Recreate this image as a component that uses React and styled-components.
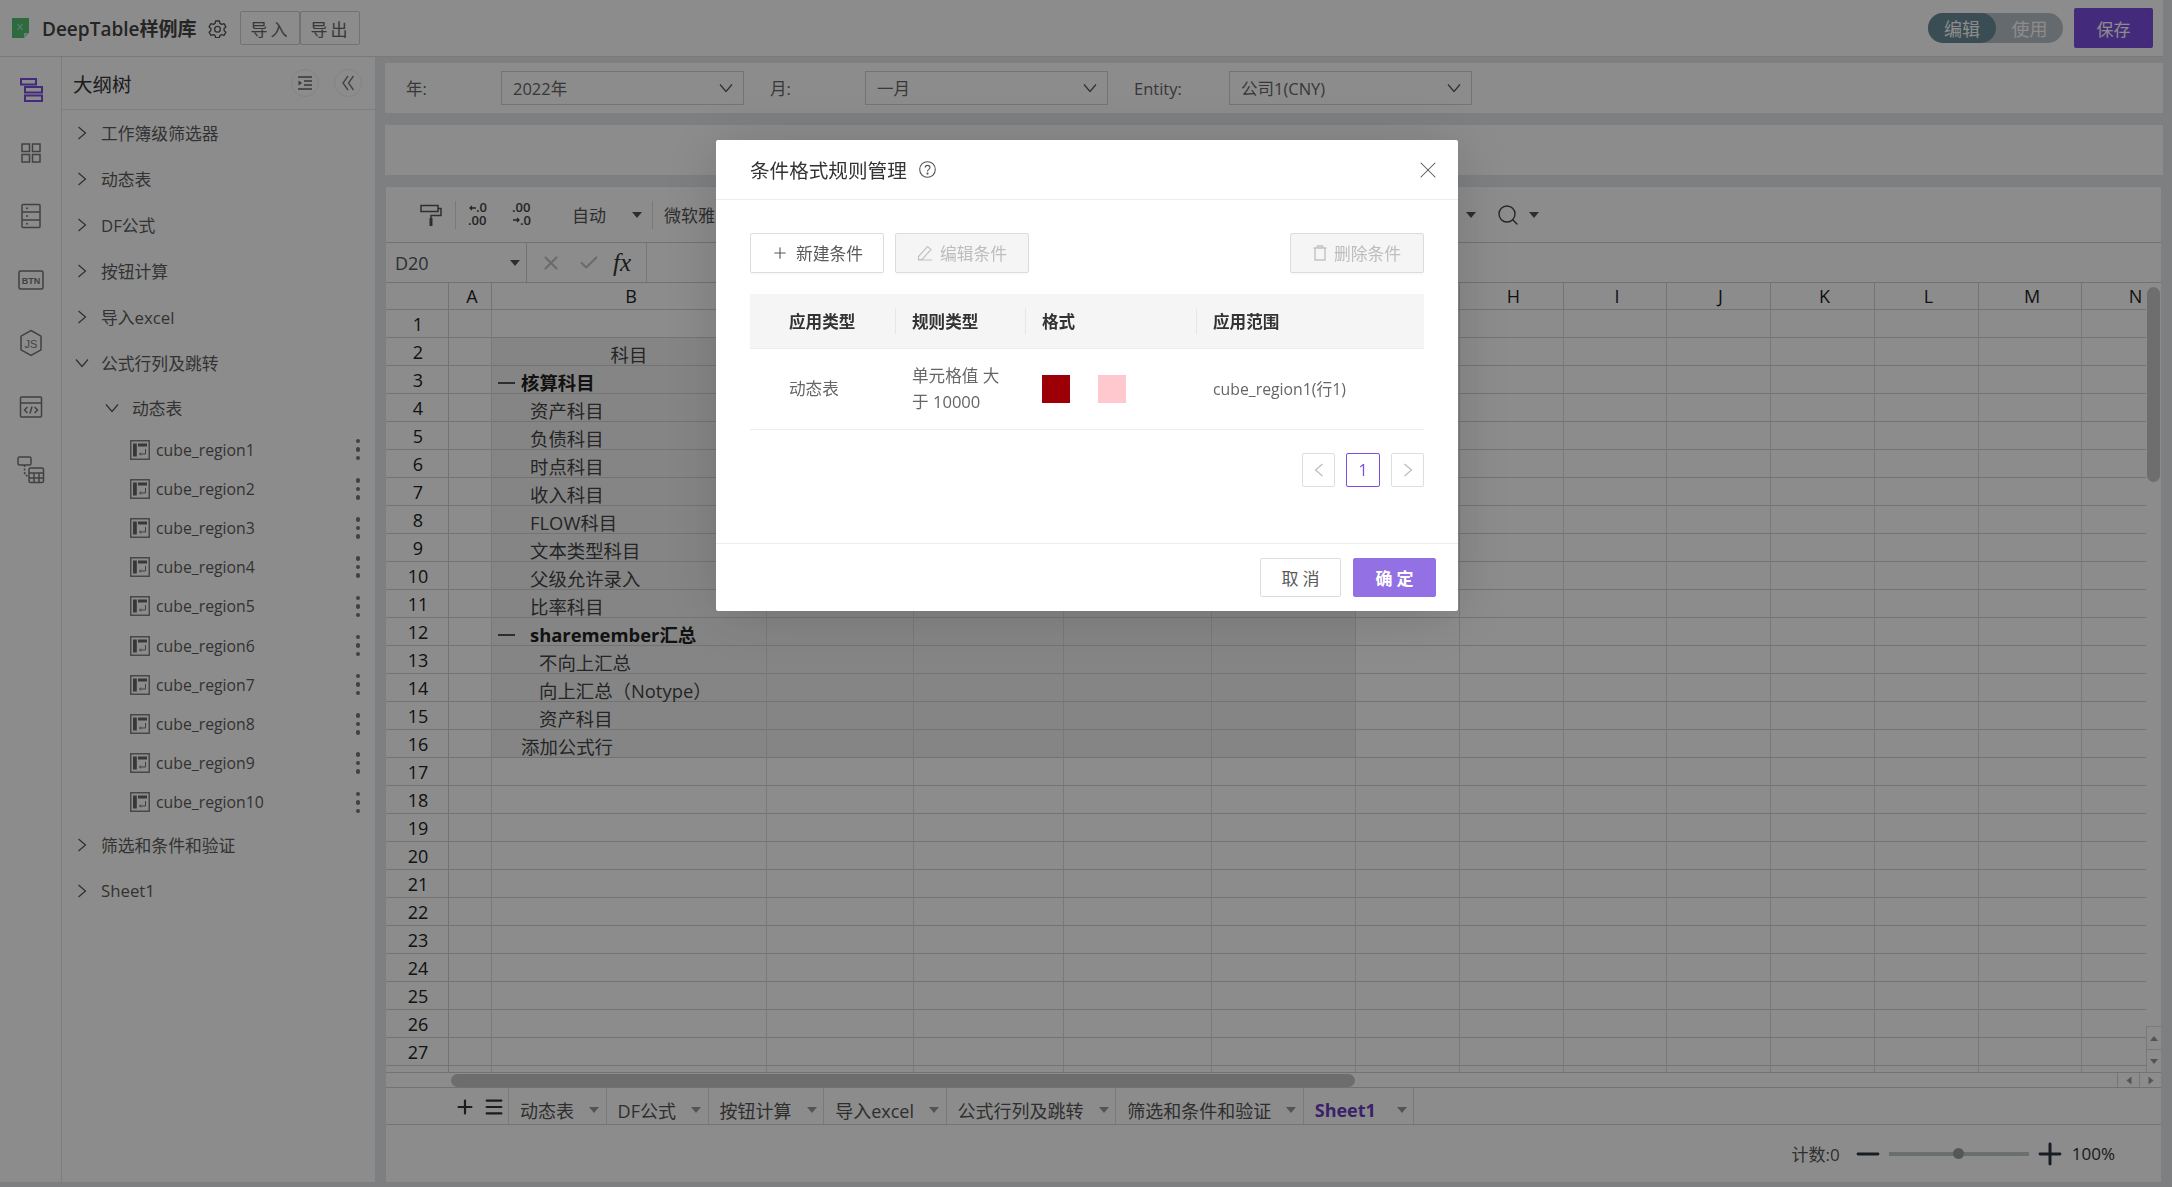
import React from 'react'
import styled, { createGlobalStyle } from 'styled-components'
import { Plus, Menu, Minus, X, Check, Search } from 'lucide-react'

const Global = createGlobalStyle`
  html, body {
    margin: 0;
    padding: 0;
    height: 100%;
    overflow: hidden;
    background: #e6e8eb;
    font-family: "Open Sans", "Noto Sans CJK SC", sans-serif;
  }
  * { box-sizing: border-box; }
`

const Page = styled.div`
  width: 2163px;
  height: 1182px;
  display: flex;
  flex-direction: column;
`

const Header = styled.header`
  height: 57px;
  flex: none;
  display: flex;
  align-items: center;
  padding: 0 10px 0 12px;
  background: #fff;
  border-bottom: 1px solid #dcdcdc;
`

const Title = styled.div`
  margin: 0 12px 0 13px;
  font-size: 19px;
  font-weight: 600;
  color: #444;
  white-space: nowrap;
`

const ImportGroup = styled.div`
  display: flex;
  margin-left: 13px;
`

const GhostBtn = styled.div`
  width: 60px;
  height: 34px;
  display: flex;
  align-items: center;
  justify-content: center;
  border: 1px solid #cfcfcf;
  border-radius: 2px;
  font-size: 17px;
  letter-spacing: 3px;
  color: #666;
  background: #fff;
`

const Spacer = styled.div`
  flex: 1;
`

const ModeSwitch = styled.div`
  width: 135px;
  height: 30px;
  display: flex;
  border-radius: 15px;
  background: #b7c2c7;
  font-size: 18px;
  color: #fff;
`

const ModeItem = styled.div`
  width: ${({ active }) => (active ? '68px' : '67px')};
  display: flex;
  align-items: center;
  justify-content: center;
  border-radius: 15px;
  background: ${({ active }) => (active ? '#6b8d9a' : 'transparent')};
`

const SaveBtn = styled.div`
  width: 79px;
  height: 40px;
  margin-left: 11px;
  display: flex;
  align-items: center;
  justify-content: center;
  border-radius: 2px;
  background: #7c4ddf;
  color: #fff;
  font-size: 17px;
`

const Main = styled.div`
  flex: 1;
  display: flex;
  min-height: 0;
`

const Rail = styled.nav`
  width: 62px;
  flex: none;
  display: flex;
  flex-direction: column;
  align-items: center;
  padding-top: 1px;
  background: #fff;
  border-right: 1px solid #e4e4e4;
`

const RailSlot = styled.div`
  height: 63.4px;
  display: flex;
  align-items: center;
  justify-content: center;
`

const TreePanel = styled.aside`
  width: 313px;
  flex: none;
  background: #fff;
`

const TreeHead = styled.div`
  height: 53px;
  display: flex;
  align-items: center;
  padding: 0 13px 0 11px;
  border-bottom: 1px solid #e8e8e8;
`

const TreeTitle = styled.div`
  flex: 1;
  font-size: 19.5px;
  color: #333;
`

const RoundBtn = styled.div`
  width: 28px;
  height: 28px;
  margin-left: ${({ gap }) => gap || 0}px;
  display: flex;
  align-items: center;
  justify-content: center;
  border: 1px solid #efefef;
  border-radius: 50%;
  color: #777;
`

const TreeRow = styled.div`
  height: ${({ leaf, nested }) => (leaf ? '39.2px' : nested ? '44px' : '46px')};
  display: flex;
  align-items: center;
  padding-left: ${({ leaf, nested }) => (leaf ? '68px' : nested ? '43px' : '13px')};
  padding-right: 14px;
  font-size: ${({ leaf }) => (leaf ? '15.8px' : '16.8px')};
  color: #5c5c5c;
`

const ArrowBox = styled.span`
  width: ${({ nested }) => (nested ? '27px' : '26px')};
  flex: none;
  display: flex;
  align-items: center;
`

const LeafLabel = styled.span`
  flex: 1;
  margin-left: 6px;
`

const Dots = styled.span`
  display: flex;
  flex-direction: column;
  gap: 4px;
  margin-right: 1px;

  i {
    width: 4.5px;
    height: 4.5px;
    border-radius: 50%;
    background: #777;
  }
`

const Content = styled.main`
  flex: 1;
  min-width: 0;
  display: flex;
  flex-direction: column;
  padding: 6px 0 0 10px;
`

const Card = styled.section`
  height: 50px;
  flex: none;
  margin-bottom: ${({ mb }) => mb}px;
  display: flex;
  align-items: center;
  padding-left: 21px;
  gap: 26px;
  background: #fff;
`

const FilterItem = styled.div`
  width: 338px;
  display: flex;
  align-items: center;
`

const FilterLabel = styled.span`
  width: 95px;
  font-size: 16.5px;
  color: #666;
`

const SelectBox = styled.div`
  width: 243px;
  height: 34px;
  display: flex;
  align-items: center;
  justify-content: space-between;
  padding: 0 10px 0 11px;
  border: 1px solid #d4d4d4;
  font-size: 16.5px;
  color: #666;
`

const Sheet = styled.section`
  flex: 1;
  min-height: 0;
  width: 1776px;
  display: flex;
  flex-direction: column;
  background: #fff;
  border-left: 1px solid #e6e6e6;
`

const Toolbar = styled.div`
  height: 57px;
  flex: none;
  display: flex;
  align-items: center;
  padding-left: 34px;
  border-top: 1px solid #e4e4e4;
  border-bottom: 1px solid #cfcfcf;
`

const ToolDivider = styled.span`
  width: 1px;
  height: 28px;
  background: ${({ clear }) => (clear ? 'transparent' : '#dcdcdc')};
  margin: ${({ m }) => m};
`

const ToolText = styled.span`
  font-size: 17px;
  color: #555;
  white-space: nowrap;
`

const Caret = styled.span`
  display: inline-block;
  flex: none;
  width: 0;
  height: 0;
  border-left: ${({ s }) => s || 5}px solid transparent;
  border-right: ${({ s }) => s || 5}px solid transparent;
  border-top: ${({ s }) => (s ? s + 1 : 6)}px solid ${({ color }) => color || '#555'};
  margin: ${({ m }) => m || 0};
`

const FormulaBar = styled.div`
  height: 40px;
  flex: none;
  display: flex;
  align-items: center;
  border-bottom: 1px solid #cfcfcf;
`

const NameBox = styled.div`
  width: 141px;
  height: 100%;
  display: flex;
  align-items: center;
  justify-content: space-between;
  padding: 0 6px 0 9px;
  border-right: 1px solid #cfcfcf;
  font-size: 18px;
  color: #555;
`

const FormulaTools = styled.div`
  width: 120px;
  height: 100%;
  display: flex;
  align-items: center;
  padding-left: 13px;
  border-right: 1px solid #d8d8d8;
  color: #c4c4c4;
`

const ToolCheck = styled(Check)`
  margin-left: 16px;
`

const FxMark = styled.span`
  margin-left: 13px;
  font: italic 25px "Liberation Serif", serif;
  color: #333;
`

const GridArea = styled.div`
  flex: 1;
  min-height: 0;
  display: flex;
`

const Viewport = styled.div`
  flex: 1;
  min-width: 0;
  overflow: hidden;
`

const Grid = styled.div`
  display: grid;
  grid-template-columns: 63px 43px 275px 147px 150px 148px 144px 104px 104px 103px 104px 104px 104px 103px 104px;
  grid-auto-rows: 28px;
  grid-template-rows: 27px;
`

const HeadCell = styled.div`
  display: flex;
  align-items: center;
  justify-content: center;
  padding-left: ${({ col }) => (col ? '4px' : '2px')};
  border-right: 1px solid #d2d2d2;
  border-bottom: 1.5px solid #d2d2d2;
  font-size: 18px;
  color: #222;
  background: #fff;
`

const Cell = styled.div`
  display: flex;
  align-items: flex-end;
  justify-content: ${({ center }) => (center ? 'center' : 'flex-start')};
  padding-left: ${({ indent }) => indent || 0}px;
  border-right: 1px solid #dcdcdc;
  border-bottom: 1px solid #d2d2d2;
  background: ${({ fill }) => (fill ? '#f3f3f3' : '#fff')};
  font-size: 18.4px;
  line-height: 21px;
  font-weight: ${({ bold }) => (bold ? 700 : 400)};
  color: ${({ bold }) => (bold ? '#222' : '#444')};
  white-space: nowrap;
`

const OutlineDash = styled.span`
  width: ${({ w }) => w}px;
  height: 2px;
  margin: 0 ${({ gap }) => gap}px 9px 0;
  background: #555;
  flex: none;
`

const VScroll = styled.div`
  width: 15px;
  flex: none;
  display: flex;
  flex-direction: column;
  padding-top: 4px;
  background: #fff;
`

const VThumb = styled.div`
  height: 195px;
  margin: 0 1px;
  border-radius: 7px;
  background: #c9c9c9;
`

const ScrollTrack = styled.div`
  flex: 1;
`

const ScrollBtn = styled.div`
  height: 23px;
  display: flex;
  align-items: center;
  justify-content: center;
  border-top: 1px solid #dcdcdc;
  border-left: 1px solid #dcdcdc;
`

const TurnCaret = styled(Caret)`
  transform: ${({ dir }) => dir};
`

const HScroll = styled.div`
  height: 16px;
  flex: none;
  display: flex;
  align-items: center;
  padding-left: 65px;
  border-top: 1px solid #cfcfcf;
  border-bottom: 1px solid #cfcfcf;
`

const HThumb = styled.div`
  width: 904px;
  height: 13px;
  border-radius: 7px;
  background: #c6c6c6;
`

const HBtn = styled.div`
  width: 22px;
  height: 100%;
  display: flex;
  align-items: center;
  justify-content: center;
  border-left: 1px solid #d8d8d8;
`

const TabBar = styled.div`
  height: 37px;
  flex: none;
  display: flex;
  padding-left: 68px;
  border-bottom: 1px solid #d4d4d4;
`

const TabTools = styled.div`
  width: 54px;
  display: flex;
  align-items: center;
  gap: 7px;
  padding-top: 2px;
  color: #333;
`

const Tab = styled.div`
  display: flex;
  align-items: center;
  padding: 8px 6.6px 0 11px;
  gap: ${({ gap }) => gap || 15}px;
  border-left: 1px solid #dcdcdc;
  border-right: ${({ last }) => (last ? '1px solid #dcdcdc' : 'none')};
  font-size: 18px;
  font-weight: ${({ active }) => (active ? 700 : 400)};
  color: ${({ active }) => (active ? '#6a3cc0' : '#555')};
  white-space: nowrap;
`

const StatusBar = styled.div`
  height: 57px;
  flex: none;
  display: flex;
  align-items: center;
  justify-content: flex-end;
  padding-right: 46px;
  font-size: 17px;
  color: #555;
`

const Slider = styled.div`
  width: 140px;
  height: 4px;
  margin: 0 4px;
  display: flex;
  align-items: center;
  padding-left: 64px;
  background: #c4c8c8;
`

const Knob = styled.span`
  width: 11px;
  height: 11px;
  border-radius: 50%;
  background: #9aa3a0;
`

const ZoomText = styled.span`
  margin-left: 5px;
  color: #333;
`

const CountText = styled.span`
  margin-right: 11px;
`

const Overlay = styled.div`
  position: fixed;
  inset: 0;
  display: flex;
  justify-content: center;
  align-items: flex-start;
  padding-top: 140px;
  background: rgba(0, 0, 0, 0.45);
`

const Modal = styled.div`
  width: 742px;
  height: 471px;
  margin-left: 2px;
  display: flex;
  flex-direction: column;
  border-radius: 2px;
  background: #fff;
  box-shadow: 0 4px 60px rgba(0, 0, 0, 0.16);
`

const ModalHead = styled.div`
  height: 60px;
  flex: none;
  display: flex;
  align-items: center;
  gap: 12px;
  padding: 0 16px 0 34px;
  border-bottom: 1px solid #ededed;
`

const ModalTitle = styled.div`
  font-size: 19.6px;
  color: #333;
`

const ModalBody = styled.div`
  flex: 1;
  padding: 33px 34px 0;
`

const ActionRow = styled.div`
  display: flex;
  gap: 11px;
  margin-bottom: 21px;
`

const ActionBtn = styled.div`
  width: 134px;
  height: 40px;
  margin-left: ${({ push }) => (push ? 'auto' : '0')};
  display: flex;
  align-items: center;
  justify-content: center;
  gap: 7px;
  border: 1px solid #dcdcdc;
  border-radius: 2px;
  background: ${({ disabled }) => (disabled ? '#f5f5f5' : '#fff')};
  box-shadow: 0 2px 0 rgba(0, 0, 0, 0.02);
  font-size: 16.8px;
  color: ${({ disabled }) => (disabled ? '#bdbdbd' : '#595959')};
`

const RuleRow = styled.div`
  display: grid;
  grid-template-columns: 145px 130px 171px 1fr;
  align-items: center;
  height: ${({ head }) => (head ? '55px' : '81px')};
  background: ${({ head }) => (head ? '#f5f5f5' : '#fff')};
  border-bottom: 1px solid #eee;
`

const RuleHead = styled.div`
  height: 26px;
  display: flex;
  align-items: center;
  padding-left: ${({ first }) => (first ? '39px' : '16px')};
  border-left: ${({ first }) => (first ? 'none' : '1px solid #e6e6e6')};
  font-size: 16.6px;
  font-weight: 700;
  color: #333;
`

const RuleCell = styled.div`
  display: flex;
  align-items: center;
  gap: 28px;
  padding: 0 14px 0 ${({ first }) => (first ? '39px' : '17px')};
  font-size: ${({ small }) => (small ? '15.8px' : '16.6px')};
  line-height: 26px;
  color: #666;
`

const Swatch = styled.span`
  width: 28px;
  height: 28px;
  background: ${({ color }) => color};
`

const Pager = styled.div`
  display: flex;
  justify-content: flex-end;
  gap: 11px;
  margin-top: 23px;
`

const PageBtn = styled.div`
  width: ${({ active }) => (active ? '34px' : '33px')};
  height: 34px;
  display: flex;
  align-items: center;
  justify-content: center;
  border: 1px solid ${({ active }) => (active ? '#7c4ddf' : '#dedede')};
  border-radius: 2px;
  font-size: 16px;
  color: ${({ active }) => (active ? '#7c4ddf' : '#bbb')};
`

const ModalFoot = styled.div`
  height: 68px;
  flex: none;
  display: flex;
  justify-content: flex-end;
  gap: 12px;
  padding: 14px 22px 0 0;
  border-top: 1px solid #ededed;
`

const FootBtn = styled.div`
  width: ${({ primary }) => (primary ? '83px' : '81px')};
  height: 39px;
  display: flex;
  align-items: center;
  justify-content: center;
  border: 1px solid ${({ primary }) => (primary ? '#9370e3' : '#dcdcdc')};
  border-radius: 2px;
  background: ${({ primary }) => (primary ? '#9370e3' : '#fff')};
  color: ${({ primary }) => (primary ? '#fff' : '#595959')};
  font-size: 17px;
  font-weight: ${({ primary }) => (primary ? 700 : 400)};
  letter-spacing: 4px;
  text-indent: 4px;
`

const Chevron = ({ dir = 'right', size = 14, color = '#555' }) => (
  <svg width={size} height={size} viewBox="0 0 14 14" fill="none" stroke={color} strokeWidth="1.2">
    {dir === 'right' && <path d="M3.5 1l7 6-7 6" />}
    {dir === 'down' && <path d="M1 3.5l6 7 6-7" />}
    {dir === 'left' && <path d="M10.5 1l-7 6 7 6" />}
  </svg>
)

const SheetLogo = () => (
  <svg width="17" height="20" viewBox="0 0 17 20">
    <path d="M0 0h17v15l-5 5H0z" fill="#52c26f" />
    <path d="M12 20v-5h5z" fill="#bfe8cb" />
    <path d="M5.5 6l5 6M10.5 6l-5 6" stroke="#9fe0b0" strokeWidth="1.2" />
  </svg>
)

const Gear = () => (
  <svg width="19" height="19" viewBox="0 0 24 24" fill="none" stroke="#555" strokeWidth="1.7" strokeLinejoin="round">
    <path d="M9.6 2.5h4.8l.6 3 2.3 1.3 2.9-1 2.4 4.2-2.3 2v2.6l2.3 2-2.4 4.2-2.9-1L15 21.1l-.6 2.4H9.6L9 21.1l-2.3-1.3-2.9 1-2.4-4.2 2.3-2v-2.6l-2.3-2 2.4-4.2 2.9 1L9 5.5z" />
    <circle cx="12" cy="13" r="3.6" />
  </svg>
)

const RailOutline = () => (
  <svg width="26" height="26" viewBox="0 0 26 26" fill="none" stroke="#7c4ddf" strokeWidth="2">
    <rect x="3" y="2" width="15" height="5.5" />
    <rect x="7" y="10" width="17" height="5.5" />
    <rect x="7" y="18.5" width="17" height="5.5" />
  </svg>
)

const RailCards = () => (
  <svg width="22" height="22" viewBox="0 0 22 22" fill="none" stroke="#777" strokeWidth="1.5">
    <rect x="2" y="2" width="7.5" height="7.5" />
    <rect x="12.5" y="2" width="7.5" height="7.5" />
    <rect x="2" y="12.5" width="7.5" height="7.5" />
    <rect x="12.5" y="12.5" width="7.5" height="7.5" />
  </svg>
)

const RailForm = () => (
  <svg width="22" height="26" viewBox="0 0 22 26" fill="none" stroke="#777" strokeWidth="1.5">
    <rect x="2" y="1.5" width="18" height="23" rx="1" />
    <path d="M2 9h18M2 17h18M6 5.2h2M6 13h2M6 20.8h2" />
  </svg>
)

const RailBtn = () => (
  <svg width="26" height="20" viewBox="0 0 26 20">
    <rect x="1" y="1" width="24" height="18" rx="1.5" fill="none" stroke="#777" strokeWidth="1.5" />
    <text x="13" y="13.5" textAnchor="middle" fontSize="9" fontWeight="700" fontFamily="Liberation Sans, sans-serif" fill="#777">BTN</text>
  </svg>
)

const RailJs = () => (
  <svg width="24" height="28" viewBox="0 0 24 28">
    <path d="M12 1.5l10 5.6v13.8l-10 5.6-10-5.6V7.100z" fill="none" stroke="#777" strokeWidth="1.5" />
    <text x="12" y="18.5" textAnchor="middle" fontSize="11" fontFamily="Liberation Sans, sans-serif" fill="#777">JS</text>
  </svg>
)

const RailCode = () => (
  <svg width="24" height="24" viewBox="0 0 24 24" fill="none" stroke="#777" strokeWidth="1.5">
    <rect x="1.5" y="2" width="21" height="20" rx="1" />
    <path d="M1.5 8h21M8.5 12l-3 3 3 3M15.5 12l3 3-3 3M13 11.5l-2 7" />
  </svg>
)

const RailCalc = () => (
  <svg width="28" height="28" viewBox="0 0 28 28" fill="none" stroke="#777" strokeWidth="1.5">
    <rect x="1" y="1" width="13" height="8" rx="1.5" />
    <path d="M7.5 9v7q0 4 4 4" strokeDasharray="2 1.5" />
    <rect x="12" y="12" width="14.5" height="14.5" rx="1.5" />
    <path d="M12 17h14.5M12 22h14.5M17 17v9.5M22 17v9.5" />
  </svg>
)

const OutdentIcon = () => (
  <svg width="16" height="16" viewBox="0 0 16 16" fill="none" stroke="#666" strokeWidth="1.4">
    <path d="M1 2h14M7 6h8M7 10h8M1 14h14" />
    <path d="M1.5 5.5L5 8l-3.5 2.5z" fill="#666" stroke="none" />
  </svg>
)

const DoubleLeft = () => (
  <svg width="14" height="16" viewBox="0 0 14 16" fill="none" stroke="#777" strokeWidth="1.3">
    <path d="M7 1L2 8l5 7M12.5 1l-5 7 5 7" />
  </svg>
)

const CubeIcon = () => (
  <svg width="20" height="20" viewBox="0 0 20 20" fill="none">
    <rect x="0.75" y="0.75" width="18.5" height="18.5" stroke="#7d7d7d" strokeWidth="1.4" />
    <rect x="3" y="3.5" width="3.8" height="13" fill="#666" />
    <rect x="8" y="3.5" width="9" height="3" fill="#666" />
    <path d="M15.5 9v5H9.5M11 12.5l-1.500 1.5 1.500 1.5" stroke="#777" strokeWidth="1" />
  </svg>
)

const Roller = () => (
  <svg width="22" height="22" viewBox="0 0 22 22" fill="none" stroke="#555" strokeWidth="1.5">
    <rect x="1" y="1.5" width="17" height="6" />
    <path d="M18 4.5h3v7h-10v3" />
    <rect x="9.5" y="14" width="3" height="8" fill="#555" stroke="none" />
  </svg>
)

const DecimalIcon = ({ more }) => (
  <svg width="21" height="26" viewBox="0 0 21 26" fontFamily="Open Sans, sans-serif" fontSize="13" fontWeight="600" fill="#444">
    {more ? (
      <>
        <text x="0" y="10">.00</text>
        <path d="M1 18h6M5 16l2 2-2 2" stroke="#444" strokeWidth="1.3" fill="none" />
        <text x="8" y="23">.0</text>
      </>
    ) : (
      <>
        <path d="M8 6H2M4 4L2 6l2 2" stroke="#444" strokeWidth="1.3" fill="none" />
        <text x="8" y="10">.0</text>
        <text x="0" y="23">.00</text>
      </>
    )}
  </svg>
)

const HelpIcon = () => (
  <svg width="17" height="17" viewBox="0 0 17 17" fill="none" stroke="#555" strokeWidth="1.1">
    <circle cx="8.5" cy="8.5" r="7.8" />
    <path d="M6.2 6.6c0-3 4.800-3 4.800 0 0 1.900-2.500 1.700-2.500 3.800" />
    <circle cx="8.5" cy="12.6" r="0.5" fill="#555" />
  </svg>
)

const PencilIcon = () => (
  <svg width="16" height="16" viewBox="0 0 16 16" fill="none" stroke="#c2c2c2" strokeWidth="1.2">
    <path d="M1.5 11.5L10.5 1.500l3.500 3-9 10H1.500zM1 15h14" />
  </svg>
)

const TrashIcon = () => (
  <svg width="14" height="16" viewBox="0 0 14 16" fill="none" stroke="#c2c2c2" strokeWidth="1.4">
    <path d="M0.5 3h13M4.5 3V1h5v2M2 3v12h10V3" />
  </svg>
)

const columns = ['A', 'B', 'C', 'D', 'E', 'F', 'G', 'H', 'I', 'J', 'K', 'L', 'M', 'N']

const subjects = {
  2: { text: '科目', center: true },
  3: { text: '核算科目', bold: true, indent: 6, dash: 17, gap: 6 },
  4: { text: '资产科目', indent: 38 },
  5: { text: '负债科目', indent: 38 },
  6: { text: '时点科目', indent: 38 },
  7: { text: '收入科目', indent: 38 },
  8: { text: 'FLOW科目', indent: 38 },
  9: { text: '文本类型科目', indent: 38 },
  10: { text: '父级允许录入', indent: 38 },
  11: { text: '比率科目', indent: 38 },
  12: { text: 'sharemember汇总', bold: true, indent: 6, dash: 17, gap: 15 },
  13: { text: '不向上汇总', indent: 47 },
  14: { text: '向上汇总（Notype）', indent: 47 },
  15: { text: '资产科目', indent: 47 },
  16: { text: '添加公式行', indent: 29 },
}

const rows = Array.from({ length: 28 }, (_, i) => i + 1)

const topTree = ['工作簿级筛选器', '动态表', 'DF公式', '按钮计算', '导入excel']
const regions = Array.from({ length: 10 }, (_, i) => `cube_region${i + 1}`)
const sheetTabs = ['动态表', 'DF公式', '按钮计算', '导入excel', '公式行列及跳转', '筛选和条件和验证']

export default function App() {
  return (
    <>
      <Global />
      <Page>
        <Header>
          <SheetLogo />
          <Title>DeepTable样例库</Title>
          <Gear />
          <ImportGroup>
            <GhostBtn>导入</GhostBtn>
            <GhostBtn>导出</GhostBtn>
          </ImportGroup>
          <Spacer />
          <ModeSwitch>
            <ModeItem active>编辑</ModeItem>
            <ModeItem>使用</ModeItem>
          </ModeSwitch>
          <SaveBtn>保存</SaveBtn>
        </Header>

        <Main>
          <Rail>
            <RailSlot><RailOutline /></RailSlot>
            <RailSlot><RailCards /></RailSlot>
            <RailSlot><RailForm /></RailSlot>
            <RailSlot><RailBtn /></RailSlot>
            <RailSlot><RailJs /></RailSlot>
            <RailSlot><RailCode /></RailSlot>
            <RailSlot><RailCalc /></RailSlot>
          </Rail>

          <TreePanel>
            <TreeHead>
              <TreeTitle>大纲树</TreeTitle>
              <RoundBtn><OutdentIcon /></RoundBtn>
              <RoundBtn gap={15}><DoubleLeft /></RoundBtn>
            </TreeHead>
            {topTree.map((t) => (
              <TreeRow key={t}>
                <ArrowBox><Chevron /></ArrowBox>
                {t}
              </TreeRow>
            ))}
            <TreeRow>
              <ArrowBox><Chevron dir="down" /></ArrowBox>
              公式行列及跳转
            </TreeRow>
            <TreeRow nested>
              <ArrowBox nested><Chevron dir="down" /></ArrowBox>
              动态表
            </TreeRow>
            {regions.map((r) => (
              <TreeRow leaf key={r}>
                <CubeIcon />
                <LeafLabel>{r}</LeafLabel>
                <Dots><i /><i /><i /></Dots>
              </TreeRow>
            ))}
            <TreeRow>
              <ArrowBox><Chevron /></ArrowBox>
              筛选和条件和验证
            </TreeRow>
            <TreeRow>
              <ArrowBox><Chevron /></ArrowBox>
              Sheet1
            </TreeRow>
          </TreePanel>

          <Content>
            <Card mb={12}>
              <FilterItem>
                <FilterLabel>年:</FilterLabel>
                <SelectBox>2022年<Chevron dir="down" /></SelectBox>
              </FilterItem>
              <FilterItem>
                <FilterLabel>月:</FilterLabel>
                <SelectBox>一月<Chevron dir="down" /></SelectBox>
              </FilterItem>
              <FilterItem>
                <FilterLabel>Entity:</FilterLabel>
                <SelectBox>公司1(CNY)<Chevron dir="down" /></SelectBox>
              </FilterItem>
            </Card>
            <Card mb={11} />

            <Sheet>
              <Toolbar>
                <Roller />
                <ToolDivider m="0 12px 0 13px" />
                <DecimalIcon />
                <ToolDivider clear m="0 11px" />
                <DecimalIcon more />
                <ToolDivider clear m="0 19px" />
                <ToolText>自动</ToolText>
                <Caret m="0 10px 0 26px" />
                <ToolDivider m="0 11px 0 0" />
                <ToolText>微软雅黑</ToolText>
                <Spacer />
                <Caret m="0 20px 0 0" />
                <Search size={24} strokeWidth={1.4} color="#444" />
                <Caret m="0 622px 0 9px" />
              </Toolbar>

              <FormulaBar>
                <NameBox>D20<Caret /></NameBox>
                <FormulaTools>
                  <X size={22} strokeWidth={2.4} />
                  <ToolCheck size={22} strokeWidth={2.4} />
                  <FxMark>fx</FxMark>
                </FormulaTools>
              </FormulaBar>

              <GridArea>
                <Viewport>
                  <Grid>
                    <HeadCell />
                    {columns.map((c) => <HeadCell col key={c}>{c}</HeadCell>)}
                    {rows.map((r) => (
                      <React.Fragment key={r}>
                        <HeadCell>{r}</HeadCell>
                        {columns.map((c, i) => {
                          const filled = r >= 2 && r <= 16 && i >= 1 && i <= 5
                          const s = c === 'B' ? subjects[r] : null
                          return (
                            <Cell key={c} fill={filled ? 1 : 0} center={s?.center} indent={s?.indent} bold={s?.bold}>
                              {s?.dash && <OutlineDash w={s.dash} gap={s.gap} />}
                              {s?.text}
                            </Cell>
                          )
                        })}
                      </React.Fragment>
                    ))}
                  </Grid>
                </Viewport>
                <VScroll>
                  <VThumb />
                  <ScrollTrack />
                  <ScrollBtn><TurnCaret s={4} color="#999" dir="rotate(180deg)" /></ScrollBtn>
                  <ScrollBtn><TurnCaret s={4} color="#999" /></ScrollBtn>
                </VScroll>
              </GridArea>

              <HScroll>
                <HThumb />
                <Spacer />
                <HBtn><TurnCaret s={4} color="#999" dir="rotate(90deg)" /></HBtn>
                <HBtn><TurnCaret s={4} color="#999" dir="rotate(-90deg)" /></HBtn>
              </HScroll>

              <TabBar>
                <TabTools>
                  <Plus size={22} strokeWidth={2.4} />
                  <Menu size={22} strokeWidth={2.4} />
                </TabTools>
                {sheetTabs.map((t) => (
                  <Tab key={t}>{t}<Caret s={5} color="#999" /></Tab>
                ))}
                <Tab active last gap={21}>Sheet1<Caret s={5} color="#999" /></Tab>
              </TabBar>

              <StatusBar>
                <CountText>计数:0</CountText>
                <Minus size={34} strokeWidth={2.1} color="#2c3540" />
                <Slider><Knob /></Slider>
                <Plus size={34} strokeWidth={2.1} color="#2c3540" />
                <ZoomText>100%</ZoomText>
              </StatusBar>
            </Sheet>
          </Content>
        </Main>
      </Page>

      <Overlay>
        <Modal>
          <ModalHead>
            <ModalTitle>条件格式规则管理</ModalTitle>
            <HelpIcon />
            <Spacer />
            <X size={28} strokeWidth={0.9} color="#555" />
          </ModalHead>
          <ModalBody>
            <ActionRow>
              <ActionBtn><Plus size={18} strokeWidth={1.5} />新建条件</ActionBtn>
              <ActionBtn disabled><PencilIcon />编辑条件</ActionBtn>
              <ActionBtn disabled push><TrashIcon />删除条件</ActionBtn>
            </ActionRow>
            <RuleRow head>
              <RuleHead first>应用类型</RuleHead>
              <RuleHead>规则类型</RuleHead>
              <RuleHead>格式</RuleHead>
              <RuleHead>应用范围</RuleHead>
            </RuleRow>
            <RuleRow>
              <RuleCell first>动态表</RuleCell>
              <RuleCell>单元格值 大于 10000</RuleCell>
              <RuleCell>
                <Swatch color="#9c0006" />
                <Swatch color="#ffc7ce" />
              </RuleCell>
              <RuleCell small>cube_region1(行1)</RuleCell>
            </RuleRow>
            <Pager>
              <PageBtn><Chevron dir="left" size={14} color="#bbb" /></PageBtn>
              <PageBtn active>1</PageBtn>
              <PageBtn><Chevron size={14} color="#bbb" /></PageBtn>
            </Pager>
          </ModalBody>
          <ModalFoot>
            <FootBtn>取消</FootBtn>
            <FootBtn primary>确定</FootBtn>
          </ModalFoot>
        </Modal>
      </Overlay>
    </>
  )
}
